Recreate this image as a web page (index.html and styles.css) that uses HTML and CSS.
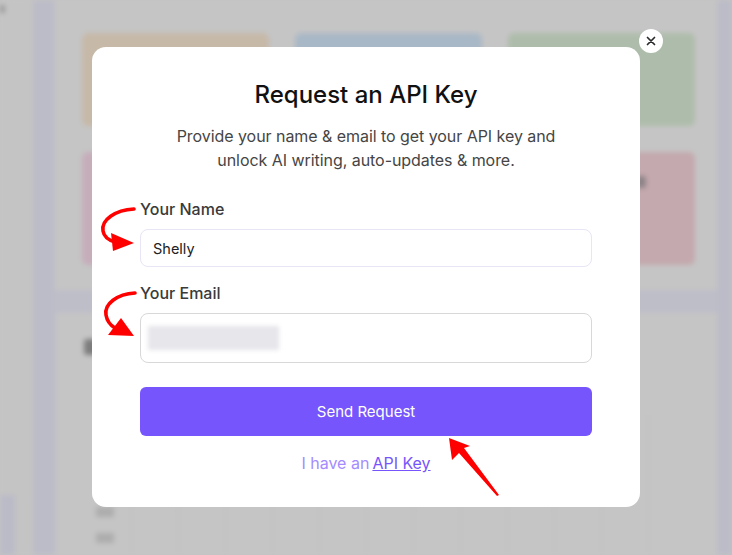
FILE: index.html
```html
<!DOCTYPE html>
<html lang="en">
<head>
<meta charset="utf-8">
<title>Request an API Key</title>
<link rel="stylesheet" href="styles.css">
</head>
<body>
<div class="bg">
  <div class="side"><span class="side-dot"></span><span class="side-active"></span></div>
  <div class="rail"></div>
  <div class="main">
    <div class="top-panel">
      <div class="cards">
        <div class="card orange"></div>
        <div class="card blue"></div>
        <div class="card green"></div>
        <div class="card pink"></div>
        <div class="card mid"></div>
        <div class="card red"><span class="red-blob"></span></div>
      </div>
    </div>
    <div class="bottom-panel">
      <div class="heading-blob"></div>
      <div class="table">
        <div class="labels"><span class="lab"></span><span class="lab"></span></div>
        <div class="col"></div><div class="col"></div><div class="col"></div><div class="col"></div>
        <div class="col"></div><div class="col"></div><div class="col"></div><div class="col"></div>
        <div class="col"></div><div class="col"></div><div class="col"></div><div class="col"></div>
      </div>
    </div>
  </div>
  <div class="rail-r"></div>
</div>

<div class="modal">
  <h1 class="title">Request an API Key</h1>
  <p class="subtitle">Provide your name &amp; email to get your API key and<br>unlock AI writing, auto-updates &amp; more.</p>
  <label class="label first">Your Name</label>
  <div class="input name-input">Shelly</div>
  <label class="label second">Your Email</label>
  <div class="input email-input"><span class="blurred"></span></div>
  <button class="send">Send Request</button>
  <p class="have">I have an<a class="key-link">API Key</a></p>
</div>

<button class="close" aria-label="Close">
  <svg width="10" height="10" viewBox="0 0 10 10"><path d="M1.5 1.5 L8.5 8.5 M8.5 1.5 L1.5 8.5" stroke="#2a2a2a" stroke-width="1.7" stroke-linecap="round"/></svg>
</button>

<svg class="annot" width="732" height="555" viewBox="0 0 732 555">
  <path d="M134 209 C 115 210, 101 220, 103 231 C 104 237, 108 240, 115 242" fill="none" stroke="#ff0000" stroke-width="3.6" stroke-linecap="round"/>
  <polygon points="111,233 113,251 134,243" fill="#ff0000"/>
  <path d="M135 293 C 117 294, 104 304, 106 315 C 107 321, 110 325, 115 328" fill="none" stroke="#ff0000" stroke-width="3.6" stroke-linecap="round"/>
  <polygon points="108,335 121,318 134,336" fill="#ff0000"/>
  <polygon points="449,438 452,460 459,453 497,496 499,495 464,448 470,446" fill="#ff0000"/>
</svg>
</body>
</html>
```
FILE: styles.css
```css
html, body {
  margin: 0;
  padding: 0;
  width: 732px;
  height: 555px;
  overflow: hidden;
  background: #c4c4c4;
  font-family: "Inter", "Noto Sans", sans-serif;
}

.bg {
  display: flex;
  width: 732px;
  height: 555px;
  filter: blur(2.5px);
}

.side {
  width: 33px;
  background: #c4c4c4;
  display: flex;
  flex-direction: column;
  justify-content: space-between;
}
.side-dot {
  display: block;
  width: 5px;
  height: 8px;
  margin-top: 5px;
  background: #9c9c9c;
}
.side-active {
  display: block;
  width: 15px;
  height: 60px;
  background: #bbbbc8;
}

.rail {
  width: 20px;
  background: #bcbcc8;
}

.main {
  flex: 1;
  background: #bebec9;
  display: flex;
  flex-direction: column;
  gap: 23px;
}

.top-panel {
  height: 290px;
  margin-left: 2px;
  box-sizing: border-box;
  background: #c5c5c5;
  padding: 33px 0 0 27px;
}

.cards {
  display: grid;
  grid-template-columns: repeat(3, 187px);
  grid-template-rows: 93px 113px;
  column-gap: 26px;
  row-gap: 26px;
}
.card { border-radius: 6px; }
.orange { background: #c6b9a8; }
.blue { background: #a9b8c6; }
.green { background: #aebdab; }
.pink { background: #c6adba; }
.mid { background: #b9b4c8; }
.red {
  background: #c4a9ae;
  display: flex;
  align-items: flex-start;
}
.red-blob {
  display: block;
  width: 10px;
  height: 12px;
  margin: 24px 0 0 128px;
  background: #8d8488;
  border-radius: 3px;
}

.bottom-panel {
  flex: 1;
  margin-left: 3px;
  background: #c5c5c5;
  display: flex;
  flex-direction: column;
}
.heading-blob {
  width: 14px;
  height: 16px;
  margin: 26px 0 0 28px;
  background: #7d7d7d;
  border-radius: 3px;
}
.table {
  flex: 1;
  margin-top: 60px;
  display: flex;
  padding-left: 40px;
}
.labels {
  width: 35px;
  display: flex;
  flex-direction: column;
  justify-content: flex-end;
  gap: 16px;
  padding-bottom: 12px;
}
.lab {
  display: block;
  width: 18px;
  height: 10px;
  background: #adadad;
}
.col {
  width: 46px;
  border-left: 1px solid #bdbdbd;
}

.rail-r {
  width: 15px;
  background: #bcbcc8;
}

/* modal */
.modal {
  position: absolute;
  left: 92px;
  top: 47px;
  width: 548px;
  height: 460px;
  box-sizing: border-box;
  background: #ffffff;
  border-radius: 14px;
  padding: 33px 48px 0;
  display: flex;
  flex-direction: column;
}

.title {
  margin: 0;
  text-align: center;
  font-size: 24px;
  line-height: 30px;
  font-weight: 500;
  color: #111111;
}

.subtitle {
  margin: 14px 0 0;
  text-align: center;
  font-size: 16px;
  line-height: 24px;
  letter-spacing: -0.05px;
  color: #454545;
}

.label {
  display: block;
  font-size: 16px;
  line-height: 24px;
  font-weight: 500;
  color: #3a3a3a;
}
.label.first { margin-top: 25px; }
.label.second { margin-top: 14px; }

.input {
  margin-top: 8px;
  box-sizing: border-box;
  border-radius: 8px;
  display: flex;
  align-items: center;
  padding-left: 12px;
  font-size: 14.5px;
  color: #222222;
}
.name-input {
  height: 38px;
  border: 1px solid #e7e5f6;
}
.email-input {
  height: 50px;
  border: 1px solid #d8d8d8;
  padding-left: 7px;
}
.blurred {
  display: block;
  width: 131px;
  height: 24px;
  background: #e6e6eb;
  filter: blur(2px);
}

.send {
  margin-top: 24px;
  height: 49px;
  border: none;
  border-radius: 6px;
  background: #7655fd;
  color: #ffffff;
  font-family: "Inter", "Noto Sans", sans-serif;
  font-size: 15px;
  padding: 0;
}

.have {
  margin: 15px 0 0;
  text-align: center;
  font-size: 16px;
  line-height: 24px;
  color: #a48cff;
}
.key-link {
  margin-left: 3px;
  color: #7655fd;
  text-decoration: underline;
}

.close {
  position: absolute;
  left: 639px;
  top: 29px;
  width: 24px;
  height: 24px;
  border-radius: 50%;
  border: none;
  padding: 0;
  background: #ffffff;
  display: flex;
  align-items: center;
  justify-content: center;
}

.annot {
  position: absolute;
  left: 0;
  top: 0;
  pointer-events: none;
}
```
